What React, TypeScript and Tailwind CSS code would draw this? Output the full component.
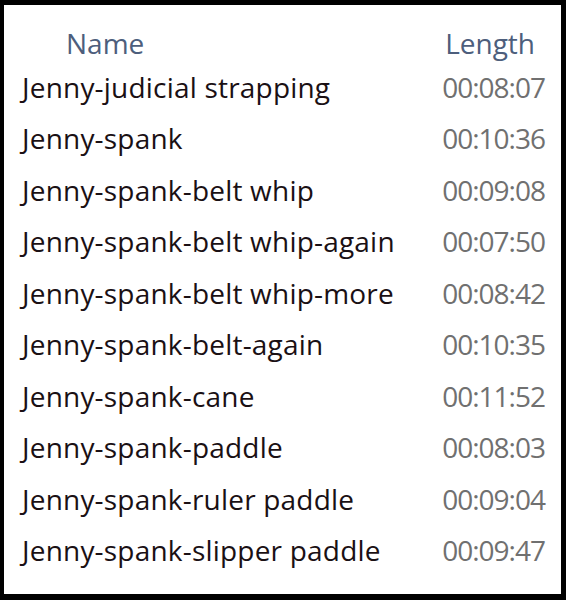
const rows: [string, string][] = [
  ['Jenny-judicial strapping', '00:08:07'],
  ['Jenny-spank', '00:10:36'],
  ['Jenny-spank-belt whip', '00:09:08'],
  ['Jenny-spank-belt whip-again', '00:07:50'],
  ['Jenny-spank-belt whip-more', '00:08:42'],
  ['Jenny-spank-belt-again', '00:10:35'],
  ['Jenny-spank-cane', '00:11:52'],
  ['Jenny-spank-paddle', '00:08:03'],
  ['Jenny-spank-ruler paddle', '00:09:04'],
  ['Jenny-spank-slipper paddle', '00:09:47'],
]

export default function App() {
  return (
    <div className="h-[600px] w-[566px] bg-black pt-[5px] pr-[5px] pb-[6px] pl-[4px]">
      <div
        className="flex h-full flex-col bg-white text-[28px] leading-none"
        style={{ fontFamily: '"Open Sans", sans-serif' }}
      >
        <div className="flex h-[56px] items-center justify-between pl-[62px] pr-[26px] pt-[20px] text-[#4d5e7c]">
          <span>Name</span>
          <span>Length</span>
        </div>
        {rows.map(([name, len]) => (
          <div
            key={name}
            className="flex h-[51.5px] items-center justify-between pl-[18px] pr-[16px]"
          >
            <span className="text-[#1a1014] tracking-[0.2px]">{name}</span>
            <span className="text-[#707070] tracking-[-1px]">{len}</span>
          </div>
        ))}
      </div>
    </div>
  )
}
